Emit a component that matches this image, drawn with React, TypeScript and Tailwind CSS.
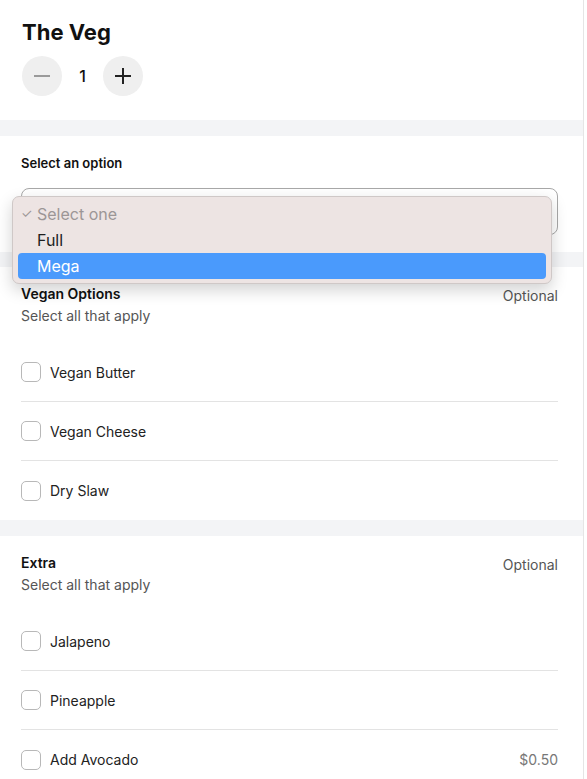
const veganOptions = [{ name: "Vegan Butter" }, { name: "Vegan Cheese" }, { name: "Dry Slaw" }];
const extraOptions = [{ name: "Jalapeno" }, { name: "Pineapple" }, { name: "Add Avocado", price: "$0.50" }];

function Checkbox() {
  return <span className="block h-[20px] w-[20px] rounded-[5px] border border-[#b8b8b8] bg-white" />;
}

function OptionGroup({
  title,
  items,
}: {
  title: string;
  items: { name: string; price?: string }[];
}) {
  return (
    <section className="pl-[21px] pr-[25px] pt-[18px]">
      <div className="flex items-start justify-between">
        <div>
          <h3 className="text-[14px] font-semibold leading-[18px] text-[#111]">{title}</h3>
          <p className="mt-[4px] text-[14px] leading-[18px] text-[#555]">Select all that apply</p>
        </div>
        <span className="mt-[2px] text-[14px] leading-[18px] text-[#555]">Optional</span>
      </div>
      <div className="mt-[18px]">
        {items.map((item, i) => (
          <div
            key={item.name}
            className={`flex h-[59px] items-center gap-[9px] ${i < items.length - 1 ? "border-b border-[#e3e3e3]" : ""}`}
          >
            <Checkbox />
            <span className="flex-1 text-[14px] text-[#222]">{item.name}</span>
            {item.price && <span className="text-[14px] text-[#777]">{item.price}</span>}
          </div>
        ))}
      </div>
    </section>
  );
}

export default function App() {
  return (
    <div className="min-h-[779px] bg-white" style={{ fontFamily: "Inter, 'Noto Sans', sans-serif" }}>
      <div className="w-[584px] min-h-[779px] border-r border-[#e5e5e5] bg-white">
        <div className="px-[22px] pt-[18px] h-[120px]">
          <h1 className="text-[22px] font-bold leading-[28px] text-[#111]">The Veg</h1>
          <div className="mt-[10px] flex items-center">
            <button className="flex h-[40px] w-[40px] items-center justify-center rounded-full bg-[#efefef]">
              <svg width="18" height="18" viewBox="0 0 18 18">
                <path d="M1 9h16" stroke="#9a9a9a" strokeWidth="2" />
              </svg>
            </button>
            <span className="w-[41px] text-center text-[16px] font-medium text-[#111]">1</span>
            <button className="flex h-[40px] w-[40px] items-center justify-center rounded-full bg-[#efefef]">
              <svg width="18" height="18" viewBox="0 0 18 18">
                <path d="M1 9h16M9 1v16" stroke="#222" strokeWidth="2" />
              </svg>
            </button>
          </div>
        </div>

        <div className="h-[16px] bg-[#f3f4f6]" />

        <section className="relative pl-[21px] pr-[25px] pt-[18px] pb-[17px]">
          <h3 className="text-[13px] font-semibold leading-[18px] text-[#111]">Select an option</h3>
          <div className="mt-[16px] h-[47px] rounded-[8px] border border-[#a8a8a8] bg-white" />
          <div className="absolute left-[12px] top-[60px] z-10 w-[540px] rounded-[7px] border border-[#cfc8c7] bg-[#ede4e3] px-[5px] pt-[4px] pb-[4px] shadow-[0_6px_16px_rgba(0,0,0,0.18)]">
            <div className="flex h-[26px] items-center text-[16px] text-[#9c9696]">
              <span className="w-[19px] pl-[3px] text-[13px]">✓</span>
              <span>Select one</span>
            </div>
            <div className="flex h-[26px] items-center pl-[19px] text-[16px] text-[#1e1e1e]">Full</div>
            <div className="flex h-[26px] items-center rounded-[4px] bg-[#4a9afc] pl-[19px] text-[16px] text-white">Mega</div>
          </div>
        </section>

        <div className="h-[15px] bg-[#f3f4f6]" />

        <OptionGroup title="Vegan Options" items={veganOptions} />

        <div className="h-[16px] bg-[#f3f4f6]" />

        <OptionGroup title="Extra" items={extraOptions} />
      </div>
    </div>
  );
}
